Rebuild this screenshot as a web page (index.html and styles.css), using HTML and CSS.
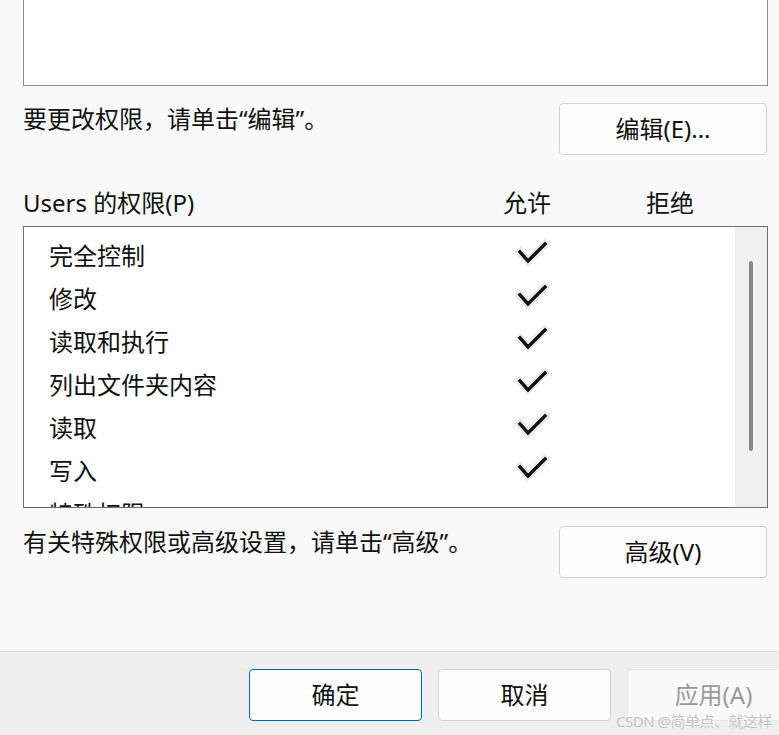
FILE: index.html
```html
<!DOCTYPE html>
<html lang="zh-CN">
<head>
<meta charset="utf-8">
<title>Users 的权限</title>
<link rel="stylesheet" href="styles.css">
</head>
<body>
<div class="page">
  <div class="main">
    <div class="group-box"></div>

    <div class="action-row first">
      <div class="hint">要更改权限，请单击“编辑”。</div>
      <button class="btn">编辑(E)...</button>
    </div>

    <div class="perm-header">
      <span>Users 的权限(P)</span>
      <span>允许</span>
      <span>拒绝</span>
    </div>

    <div class="perm-list">
      <div class="perm-rows">
        <div class="perm-row"><span class="perm-name">完全控制</span><svg class="check" viewBox="0 0 34 30"><path class="c1" d="M5 13 L13 22 L30 5"/><path class="c2" d="M5 13 L13 22 L30 5"/><path class="c3" d="M5 13 L13 22 L30 5"/></svg></div>
        <div class="perm-row"><span class="perm-name">修改</span><svg class="check" viewBox="0 0 34 30"><path class="c1" d="M5 13 L13 22 L30 5"/><path class="c2" d="M5 13 L13 22 L30 5"/><path class="c3" d="M5 13 L13 22 L30 5"/></svg></div>
        <div class="perm-row"><span class="perm-name">读取和执行</span><svg class="check" viewBox="0 0 34 30"><path class="c1" d="M5 13 L13 22 L30 5"/><path class="c2" d="M5 13 L13 22 L30 5"/><path class="c3" d="M5 13 L13 22 L30 5"/></svg></div>
        <div class="perm-row"><span class="perm-name">列出文件夹内容</span><svg class="check" viewBox="0 0 34 30"><path class="c1" d="M5 13 L13 22 L30 5"/><path class="c2" d="M5 13 L13 22 L30 5"/><path class="c3" d="M5 13 L13 22 L30 5"/></svg></div>
        <div class="perm-row"><span class="perm-name">读取</span><svg class="check" viewBox="0 0 34 30"><path class="c1" d="M5 13 L13 22 L30 5"/><path class="c2" d="M5 13 L13 22 L30 5"/><path class="c3" d="M5 13 L13 22 L30 5"/></svg></div>
        <div class="perm-row"><span class="perm-name">写入</span><svg class="check" viewBox="0 0 34 30"><path class="c1" d="M5 13 L13 22 L30 5"/><path class="c2" d="M5 13 L13 22 L30 5"/><path class="c3" d="M5 13 L13 22 L30 5"/></svg></div>
        <div class="perm-row"><span class="perm-name">特殊权限</span></div>
      </div>
      <div class="scrollbar"><div class="thumb"></div></div>
    </div>

    <div class="action-row second">
      <div class="hint">有关特殊权限或高级设置，请单击“高级”。</div>
      <button class="btn">高级(V)</button>
    </div>
  </div>

  <div class="footer">
    <button class="btn default">确定</button>
    <button class="btn">取消</button>
    <button class="btn disabled">应用(A)</button>
  </div>

  <div class="watermark">CSDN @简单点、就这样</div>
</div>
</body>
</html>
```

FILE: styles.css
```css
html, body {
  margin: 0;
  padding: 0;
  width: 779px;
  height: 735px;
  overflow: hidden;
  background: #f9f9f9;
}

.page {
  position: relative;
  width: 779px;
  height: 735px;
  display: flex;
  flex-direction: column;
  font-family: "Noto Sans", "Noto Sans CJK SC", sans-serif;
  font-size: 24px;
  color: #111111;
}

.main {
  padding: 0 11px 0 23px;
  height: 651px;
  box-sizing: border-box;
}

.group-box {
  height: 85px;
  background: #ffffff;
  border: 1px solid #8a8f96;
  border-top: none;
}

.action-row {
  display: flex;
  justify-content: space-between;
  align-items: flex-start;
}

.action-row.first {
  margin-top: 17px;
}

.action-row.second {
  margin-top: 18px;
}

.hint {
  line-height: 32px;
  white-space: nowrap;
}

.btn {
  font-family: "Noto Sans", "Noto Sans CJK SC", sans-serif;
  font-size: 24px;
  color: #111111;
  width: 208px;
  height: 52px;
  margin-right: 1px;
  padding: 0;
  background: #fdfdfd;
  border: 1px solid #d2d2d2;
  border-radius: 4px;
  box-sizing: border-box;
  line-height: 1;
}

.perm-header {
  display: grid;
  grid-template-columns: 480px 143px 1fr;
  height: 34px;
  line-height: 32px;
  margin-top: 32px;
}

.perm-list {
  margin-top: 5px;
  height: 282px;
  box-sizing: border-box;
  border: 1px solid #6e6e6e;
  background: #ffffff;
  display: flex;
  overflow: hidden;
}

.perm-rows {
  flex: 1;
  padding-top: 6px;
  overflow: hidden;
}

.perm-row {
  height: 43px;
  display: grid;
  grid-template-columns: 491px 34px;
  align-items: center;
}

.perm-name {
  padding-left: 25px;
  white-space: nowrap;
}

.check {
  width: 34px;
  height: 30px;
  margin-top: -1px;
}

.check path {
  fill: none;
  stroke-linecap: square;
  stroke-linejoin: miter;
}

.check .c1 {
  stroke: #d4d4d4;
  stroke-width: 7;
}

.check .c2 {
  stroke: #ffffff;
  stroke-width: 5.5;
}

.check .c3 {
  stroke: #111111;
  stroke-width: 3.5;
}

.scrollbar {
  width: 32px;
  background: #f0f0f0;
  padding-top: 34px;
  box-sizing: border-box;
}

.thumb {
  width: 4px;
  height: 190px;
  margin-left: 14px;
  background: #878787;
  border-radius: 2px;
}

.footer {
  flex: 1;
  background: #efefef;
  border-top: 1px solid #e2e2e2;
  display: flex;
  gap: 16px;
  padding: 17px 0 0 249px;
  overflow: hidden;
}

.footer .btn {
  width: 173px;
  flex: none;
  margin-right: 0;
}

.btn.default {
  border: 1px solid #0067c0;
}

.btn.disabled {
  color: #9a9a9a;
  background: #f9f9f9;
  border-color: #e6e6e6;
}

.watermark {
  position: absolute;
  right: 7px;
  bottom: 6px;
  font-size: 15px;
  line-height: 15px;
  letter-spacing: -0.5px;
  color: #c4c4c4;
  text-shadow: 0 0 2px #ffffff;
  white-space: nowrap;
}
```
